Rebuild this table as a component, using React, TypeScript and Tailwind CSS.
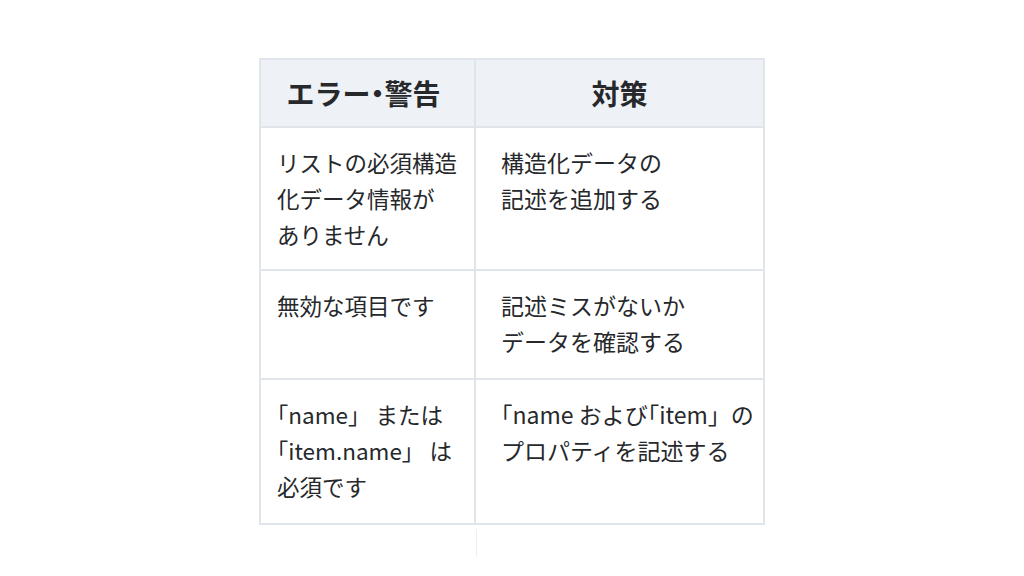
import React from "react"

const B = ({ c }: { c: string }) => <span className="[font-feature-settings:'halt']">{c}</span>

const rows: { err: React.ReactNode[]; fix: React.ReactNode[]; h: string }[] = [
    { err: ["リストの必須構造", "化データ情報が", "ありません"], fix: ["構造化データの", "記述を追加する"], h: "h-[143px]" },
    { err: ["無効な項目です"], fix: ["記述ミスがないか", "データを確認する"], h: "h-[109px]" },
    {
        err: [
            <><B c="「" />name」 または</>,
            <><B c="「" />item.name」 は</>,
            "必須です",
        ],
        fix: [
            <><B c="「" />name および<B c="「" />item」の</>,
            "プロパティを記述する",
        ],
        h: "h-[143px]",
    },
]

export default function App() {
    return (
        <div
            className="w-[1024px] h-[576px] bg-white flex flex-col items-center pt-[58px] text-[#26282b]"
            style={{ fontFamily: '"Noto Sans CJK JP", "Noto Sans", sans-serif' }}
        >
            <div className="grid grid-cols-[215px_287px] border-2 border-[#dfe5eb]">
                {/* Header */}
                <div className="h-[68px] bg-[#eef1f5] border-r-2 border-b-2 border-[#dfe5eb] flex items-center justify-center pr-[8px] text-[28px] font-bold">
                    エラー<B c="・" />警告
                </div>
                <div className="h-[68px] bg-[#eef1f5] border-b-2 border-[#dfe5eb] flex items-center justify-center text-[28px] font-bold">
                    対策
                </div>

                {rows.map((r, i) => (
                    <React.Fragment key={i}>
                        <div
                            className={`${r.h} border-r-2 ${i < rows.length - 1 ? "border-b-2" : ""} border-[#dfe5eb] pl-[16px] pt-[16px] text-[22.5px] leading-[36px]`}
                        >
                            {r.err.map((l, j) => (
                                <div key={j} className="whitespace-nowrap">{l}</div>
                            ))}
                        </div>
                        <div
                            className={`${r.h} ${i < rows.length - 1 ? "border-b-2" : ""} border-[#dfe5eb] pl-[25px] pt-[16px] text-[23px] leading-[36px]`}
                        >
                            {r.fix.map((l, j) => (
                                <div key={j} className="whitespace-nowrap">{l}</div>
                            ))}
                        </div>
                    </React.Fragment>
                ))}
            </div>
            <div className="w-px h-[28px] bg-[#edf0f3] ml-[-72px] mt-[4px]" />
        </div>
    )
}
